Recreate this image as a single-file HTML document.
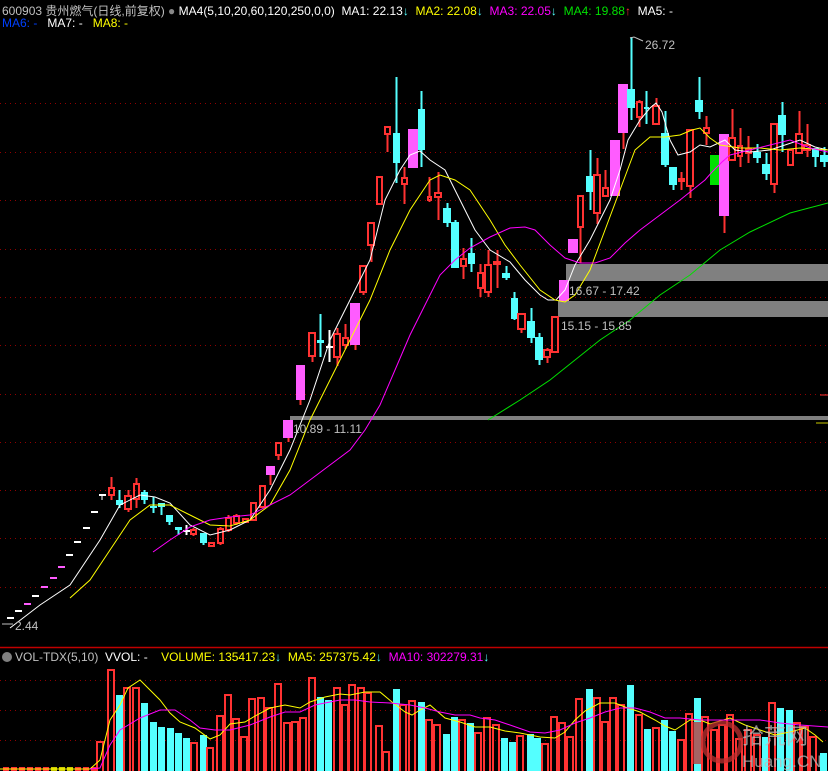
<!DOCTYPE html>
<html><head><meta charset="utf-8"><style>
html,body{margin:0;padding:0;background:#000;width:828px;height:771px;overflow:hidden}
.h{position:absolute;left:2px;font:12px "Liberation Sans","Noto Sans CJK SC",sans-serif;white-space:pre;color:#c0c0c0}
span.w{color:#fff}span.y{color:#ffff00}span.m{color:#ff00ff}span.g{color:#00e000}span.b{color:#0040ff}
span.dn{color:#54ffff}span.up{color:#ff3232}
</style></head><body>
<svg id="s" width="828" height="771" style="position:absolute;left:0;top:0">
<g id="grid"></g><g id="bands">
<rect x="566" y="264" width="262" height="17" fill="#808080"/>
<rect x="558" y="301" width="270" height="16" fill="#808080"/>
<rect x="290" y="416" width="538" height="4" fill="#808080"/>
</g>
<g id="c"></g><g id="l"></g>
<g font-family="Liberation Sans,sans-serif" font-size="12" fill="#c0c0c0">
<text x="569" y="295">16.67 - 17.42</text>
<text x="561" y="330">15.15 - 15.85</text>
<text x="293" y="433">10.89 - 11.11</text>
<text x="645" y="49">26.72</text>
<text x="15" y="630">2.44</text>
</g>
<polyline points="630,38 634,37 643,41" stroke="#c0c0c0" fill="none"/>
<polyline points="2,624 13,624" stroke="#c0c0c0" fill="none"/>
<line x1="0" y1="647.5" x2="828" y2="647.5" stroke="#c00000" stroke-width="1.5"/>
<line x1="820" y1="395" x2="828" y2="395" stroke="#ff3232"/>
<line x1="816" y1="423" x2="828" y2="423" stroke="#c8c800"/>
<circle cx="7" cy="657" r="5" fill="#808080"/>
<g opacity="0.75">
<circle cx="722" cy="742" r="19" fill="none" stroke="#c03030" stroke-width="5"/>
<rect x="693" y="722" width="8" height="42" fill="#c03030"/>
<text x="742" y="744" font-family="Noto Sans CJK SC,sans-serif" font-size="22" fill="#bbb">拾荒网</text>
<text x="742" y="767" font-family="Liberation Sans,sans-serif" font-size="17" fill="#bbb">Huang.CN</text>
</g>
</svg>
<div class="h" style="top:2px">600903 贵州燃气(日线,前复权) <span style="color:#888">●</span> <span class="w">MA4(5,10,20,60,120,250,0,0)</span>  <span class="w">MA1: 22.13</span><span class="dn">↓</span>  <span class="y">MA2: 22.08</span><span class="dn">↓</span>  <span class="m">MA3: 22.05</span><span class="dn">↓</span>  <span class="g">MA4: 19.88</span><span class="up">↑</span>  <span class="w">MA5: -</span></div>
<div class="h" style="top:16px"><span class="b">MA6: -</span>   <span class="w">MA7: -</span>   <span class="y">MA8: -</span></div>
<div class="h" style="top:650px;left:15px">VOL-TDX(5,10)  <span class="w">VVOL: -</span>    <span class="y">VOLUME: 135417.23</span><span class="dn">↓</span>  <span class="y">MA5: 257375.42</span><span class="dn">↓</span>  <span class="m">MA10: 302279.31</span><span class="dn">↓</span></div>
<script>
var NS="http://www.w3.org/2000/svg";
function el(p,t,a){var e=document.createElementNS(NS,t);for(var k in a)e.setAttribute(k,a[k]);p.appendChild(e);return e;}
var G=document.getElementById('grid');
[103,152,200,249,297,345,394,442,490,538,587,680,710,740].forEach(function(y){el(G,'line',{x1:0,x2:828,y1:y+.5,y2:y+.5,stroke:'#900000','stroke-dasharray':'1,4'});});
var C=document.getElementById('c');
var RED='#ff3232',CY='#54ffff',PK='#ff5cff',GR='#00e000';
// dashes
[[10,618,'w'],[18,611,'w'],[27,604,'p'],[35,596,'w'],[44,587,'p'],[53,578,'p'],[61,567,'p'],[69,555,'w'],[77,542,'w'],[86,528,'w'],[94,512,'w'],[102,495,'w']].forEach(function(d){el(C,'rect',{x:d[0]-3,y:d[1]-1,width:7,height:2,fill:d[2]=='w'?'#fff':PK});});
el(C,'line',{x1:102,x2:102,y1:495,y2:500,stroke:'#fff'});
// x1,x2,top,bot,hi,lo,type
var K=[
[108,114,488,495,477,500,'r'],[116,122,500,505,490,508,'c'],[124,131,496,509,490,512,'r'],[133,139,484,499,478,508,'r'],
[141,147,492,500,490,504,'c'],[150,156,506,508,497,513,'c'],[158,164,503,507,503,515,'c'],[166,172,515,522,515,525,'c'],
[175,181,527,530,527,535,'c'],[183,189,530,531,525,535,'w'],[190,196,530,534,528,536,'r'],[200,206,533,543,533,545,'c'],
[208,214,543,546,542,547,'r'],[217,223,529,543,527,545,'r'],[225,231,518,530,515,532,'r'],[233,239,516,523,514,525,'r'],
[242,248,519,522,518,523,'r'],[250,256,503,520,503,520,'r'],[259,265,486,507,486,507,'r'],[266,274,466,475,466,485,'p'],
[275,281,443,455,443,460,'r'],[283,292,420,438,420,442,'p'],[296,304,365,400,365,405,'p'],
[308,315,333,356,333,362,'r'],[317,323,340,343,314,357,'c'],[326,332,346,348,330,362,'w'],[333,340,334,357,328,366,'r'],
[342,348,338,345,324,349,'r'],[350,359,303,345,303,350,'p'],[359,366,266,292,266,295,'r'],[367,374,223,245,223,262,'r'],
[376,382,177,204,177,204,'r'],[384,390,127,134,127,152,'r'],[393,399,133,163,77,183,'c'],[401,407,178,184,167,204,'r'],
[408,417,129,168,129,168,'p'],[418,424,109,150,91,167,'c'],[427,431,197,200,177,202,'r'],[434,441,193,197,172,220,'r'],
[443,450,208,223,203,227,'c'],[451,458,222,268,220,268,'c'],[460,466,259,266,248,279,'r'],[468,474,253,264,238,272,'c'],
[477,483,273,288,264,297,'r'],[484,491,265,292,250,297,'r'],[493,500,262,264,250,288,'r'],[502,509,273,278,266,280,'c'],
[511,517,298,319,292,320,'c'],[517,525,314,329,314,333,'r'],[527,534,321,338,308,343,'c'],[535,542,337,360,333,365,'c'],
[543,550,350,357,348,363,'r'],[551,558,317,352,317,352,'r'],[559,568,280,301,280,301,'p'],[568,577,239,253,239,253,'p'],
[577,583,196,227,196,263,'r'],[586,593,176,192,150,210,'c'],[593,600,175,213,158,224,'r'],[602,608,188,196,170,196,'r'],
[610,619,140,196,140,196,'p'],[618,627,84,133,84,149,'p'],[627,634,89,108,37,120,'c'],[636,642,102,117,100,127,'r'],
[644,648,107,109,91,124,'c'],[652,659,106,124,98,124,'r'],[661,668,133,165,111,167,'c'],[669,676,167,185,167,190,'c'],
[678,684,179,181,172,190,'r'],[686,693,130,186,130,198,'r'],[695,702,100,112,77,119,'c'],[703,709,128,133,116,145,'r'],
[710,719,155,185,155,185,'g'],[719,728,134,216,134,233,'p'],[728,735,138,160,109,160,'r'],[737,742,146,156,128,167,'r'],
[745,751,149,153,136,163,'r'],[753,760,152,158,144,163,'c'],[762,769,164,174,153,180,'c'],[770,777,124,184,124,193,'r'],
[778,785,115,135,102,152,'c'],[787,793,150,165,150,165,'r'],[795,802,134,153,111,153,'r'],[803,810,145,150,124,157,'r'],
[812,818,148,157,148,167,'c'],[820,827,155,162,147,167,'c']];
K.forEach(function(k){var x1=k[0],x2=k[1],t=k[2],b=k[3],h=k[4],lo=k[5],ty=k[6],cx=Math.round((x1+x2)/2)+.5;
 if(ty=='r'){el(C,'line',{x1:cx,x2:cx,y1:h,y2:t,stroke:RED,'stroke-width':2});el(C,'line',{x1:cx,x2:cx,y1:b,y2:lo,stroke:RED,'stroke-width':2});
  el(C,'rect',{x:x1+1,y:t,width:x2-x1-1,height:Math.max(b-t,2),fill:'none',stroke:RED,'stroke-width':2});}
 else{var col=ty=='c'?CY:ty=='p'?PK:ty=='g'?GR:'#fff';el(C,'line',{x1:cx,x2:cx,y1:h,y2:lo,stroke:ty=='p'?RED:col,'stroke-width':2});
  el(C,'rect',{x:x1,y:t,width:x2-x1+1,height:Math.max(b-t,2),fill:col});}
});
// volume
var V=[[100,742,'r'],[111,670,'r'],[119,695,'c'],[127,688,'r'],[136,688,'r'],[144,703,'c'],[153,722,'c'],[161,727,'c'],[170,728,'c'],[178,733,'c'],[186,738,'c'],[194,743,'r'],[203,735,'c'],[210,748,'r'],[220,716,'r'],[228,695,'r'],[236,719,'r'],[244,737,'r'],[252,699,'r'],[261,698,'r'],[269,708,'r'],[278,684,'r'],[287,723,'r'],[295,722,'r'],[303,718,'r'],[312,678,'r'],[320,697,'c'],[328,700,'c'],[337,688,'r'],[345,705,'r'],[352,685,'r'],[361,688,'r'],[368,693,'r'],[379,726,'r'],[386,752,'r'],[396,689,'c'],[403,705,'r'],[412,701,'r'],[421,702,'c'],[429,720,'r'],[437,725,'r'],[446,734,'c'],[454,717,'c'],[462,720,'r'],[470,723,'c'],[478,733,'r'],[487,718,'r'],[496,725,'r'],[504,738,'c'],[512,742,'c'],[520,736,'r'],[530,734,'c'],[537,738,'c'],[545,744,'r'],[554,717,'r'],[562,723,'r'],[570,737,'r'],[579,699,'r'],[589,689,'c'],[597,698,'r'],[605,722,'r'],[613,698,'r'],[621,705,'r'],[630,685,'c'],[639,715,'r'],[647,729,'c'],[656,728,'r'],[664,720,'c'],[672,731,'c'],[681,740,'r'],[689,714,'r'],[697,698,'c'],[705,717,'r'],[714,730,'r'],[722,725,'r'],[730,715,'r'],[739,739,'r'],[748,730,'r'],[757,735,'r'],[765,737,'c'],[772,703,'r'],[780,708,'c'],[789,710,'c'],[797,723,'r'],[805,727,'r'],[813,737,'r'],[823,753,'c']];
for(var x=3;x<96;x+=8)el(C,'rect',{x:x,y:767,width:6,height:4,fill:x>50&&x<70?'#c8c800':RED});
V.forEach(function(v){if(v[2]=='r')el(C,'rect',{x:v[0]-3,y:v[1],width:6,height:772-v[1],fill:'none',stroke:RED,'stroke-width':2});
 else el(C,'rect',{x:v[0]-3,y:v[1],width:7,height:771-v[1],fill:CY});});
var L=document.getElementById('l');
function pl(p,c){el(L,'polyline',{points:p,fill:'none',stroke:c,'stroke-width':1});}
pl("10,628 40,605 70,585 100,540 120,505 140,495 155,497 170,503 190,525 210,535 230,530 250,520 270,490 290,450 310,400 330,340 350,300 370,260 385,200 400,170 410,155 420,151 430,160 445,170 460,200 475,230 490,250 510,262 525,280 540,295 548,300 556,300 565,290 575,265 590,240 610,200 620,170 628,140 640,120 650,108 656,103 662,112 670,140 678,155 690,152 700,145 710,147 725,140 735,150 750,152 770,150 785,145 800,140 815,147 828,150",'#fff');
pl("70,598 90,580 110,550 130,520 150,505 170,505 190,515 210,525 230,526 250,520 270,505 290,470 310,420 330,380 350,340 370,300 390,250 410,210 430,180 440,175 455,180 470,190 490,220 505,245 520,265 540,290 555,300 565,302 575,295 590,270 605,230 620,190 635,150 650,137 665,137 680,135 692,130 700,128 710,138 720,145 740,148 760,148 780,150 800,148 828,150",'#ffff00');
pl("153,552 170,540 190,527 210,520 230,517 250,515 270,505 290,495 310,480 330,465 350,450 365,430 380,405 395,370 410,335 425,305 440,275 455,260 470,248 490,237 510,228 525,227 535,230 550,245 565,258 580,263 595,263 610,258 625,243 640,230 660,215 680,200 695,188 705,180 712,172 722,162 730,155 750,150 770,145 790,140 810,148 828,152",'#ff00ff');
pl("488,420 520,400 550,380 570,364 600,340 630,320 660,295 690,275 720,250 750,232 790,213 828,203",'#00e000');
pl("0,769 90,769 100,760 110,720 120,705 128,688 140,680 150,690 160,700 170,713 180,722 195,728 210,739 220,735 230,724 245,722 255,716 270,708 285,705 300,708 310,702 325,697 340,694 350,695 365,692 380,692 392,702 405,712 412,715 420,710 430,705 445,718 460,722 475,727 490,727 505,731 520,733 540,737 555,738 565,732 575,720 585,711 600,703 615,703 625,707 640,712 655,720 665,726 675,730 690,720 700,720 710,724 730,718 745,725 760,730 775,735 790,732 805,728 815,735 823,742",'#ffff00');
pl("90,769 100,768 110,745 120,730 140,718 160,710 175,710 190,720 200,728 215,730 230,730 250,725 270,717 285,712 300,712 315,705 330,702 340,700 355,700 370,702 390,703 410,705 425,708 440,712 455,715 470,715 480,718 495,720 510,725 530,732 545,733 560,730 575,723 590,718 605,712 620,708 635,708 650,712 665,718 680,718 700,720 720,720 740,720 760,720 780,723 800,725 828,727",'#ff00ff');
</script>
</body></html>
